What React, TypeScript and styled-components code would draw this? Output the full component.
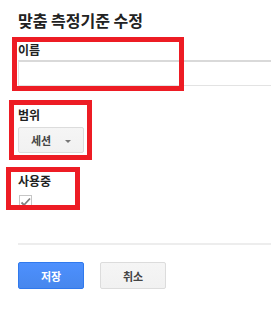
import styled, { createGlobalStyle } from "styled-components";

const GlobalStyle = createGlobalStyle`
  html, body {
    margin: 0;
    padding: 0;
    background: #fff;
    overflow: hidden;
  }
  body {
    font-family: "Noto Sans CJK KR", "Liberation Sans", sans-serif;
    color: #222;
  }
`;

const Page = styled.div`
  width: 271px;
  padding: 10px 0 0 18px;
  box-sizing: border-box;
`;

const Title = styled.h1`
  margin: 0;
  font-size: 16px;
  line-height: 20px;
  font-weight: 700;
  color: #222;
`;

const Field = styled.div<{ $top: number }>`
  position: relative;
  margin-top: ${(p) => p.$top}px;
  display: flex;
  flex-direction: column;
  align-items: flex-start;
`;

const Label = styled.div<{ $gap: number }>`
  font-size: 12px;
  line-height: 16px;
  font-weight: 700;
  color: #222;
  margin-bottom: ${(p) => p.$gap}px;
`;

const TextInput = styled.input`
  width: 253px;
  height: 26px;
  box-sizing: border-box;
  border: 1px solid #e3e3e3;
  border-right: 0;
  border-top: 2px solid #d9d9d9;
  background: #fff;
  outline: none;
  padding: 0 6px;
`;

const GrayButton = styled.button`
  display: flex;
  align-items: center;
  justify-content: center;
  gap: 14px;
  width: 66px;
  height: 26px;
  box-sizing: border-box;
  padding: 0;
  border: 1px solid #dcdcdc;
  border-radius: 2px;
  background: linear-gradient(#f5f5f5, #f1f1f1);
  color: #444;
  font-family: inherit;
  font-size: 11px;
  font-weight: 700;
`;

const Arrow = styled.span`
  width: 0;
  height: 0;
  border-left: 3px solid transparent;
  border-right: 3px solid transparent;
  border-top: 3px solid #777;
  margin-top: 2px;
`;

const CheckBox = styled.span`
  display: flex;
  align-items: center;
  justify-content: center;
  width: 13px;
  height: 13px;
  box-sizing: border-box;
  border: 1px solid #c6c6c6;
  background: #fff;
  margin-left: 1px;
`;

const Highlight = styled.div<{ $left: number; $top: number; $w: number; $h: number }>`
  position: absolute;
  left: ${(p) => p.$left}px;
  top: ${(p) => p.$top}px;
  width: ${(p) => p.$w}px;
  height: ${(p) => p.$h}px;
  box-sizing: border-box;
  border: 5px solid #ed1c24;
  pointer-events: none;
`;

const Divider = styled.hr`
  margin: 35px 0 0;
  border: 0;
  border-top: 2px solid #ededed;
  width: 253px;
`;

const Actions = styled.div`
  display: flex;
  gap: 16px;
  margin-top: 17px;
`;

const PrimaryButton = styled.button`
  width: 66px;
  height: 27px;
  box-sizing: border-box;
  border: 1px solid #3079ed;
  border-radius: 2px;
  background: linear-gradient(#4d90fe, #4787ed);
  color: #fff;
  font-family: inherit;
  font-size: 11px;
  font-weight: 700;
`;

const CancelButton = styled(GrayButton)`
  height: 27px;
`;

export default function App() {
  return (
    <>
      <GlobalStyle />
      <Page>
        <Title>맞춤 측정기준 수정</Title>

        <Field $top={12}>
          <Label $gap={2}>이름</Label>
          <TextInput />
          <Highlight $left={-6} $top={-5} $w={172} $h={54} />
        </Field>

        <Field $top={21}>
          <Label $gap={4}>범위</Label>
          <GrayButton>
            세션
            <Arrow />
          </GrayButton>
          <Highlight $left={-9} $top={-7} $w={83} $h={60} />
        </Field>

        <Field $top={20}>
          <Label $gap={6}>사용중</Label>
          <CheckBox>
            <svg width="11" height="10" viewBox="0 0 11 10">
              <path d="M1.5 5.5 L4 8 L10 1.5" fill="none" stroke="#808080" strokeWidth="1.8" />
            </svg>
          </CheckBox>
          <Highlight $left={-12} $top={-6} $w={74} $h={43} />
        </Field>

        <Divider />

        <Actions>
          <PrimaryButton>저장</PrimaryButton>
          <CancelButton>취소</CancelButton>
        </Actions>
      </Page>
    </>
  );
}
